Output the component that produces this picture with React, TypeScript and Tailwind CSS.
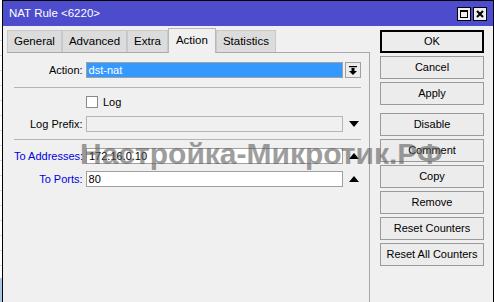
import React from "react";

const font = { fontFamily: '"Liberation Sans", Arial, sans-serif' };

function Tab({ label, active }: { label: string; active?: boolean }) {
  if (active) {
    return (
      <div className="relative z-10 -mb-px flex h-[25px] items-center border border-b-0 border-[#b8b8b8] bg-[#f0f0f0] px-[7px] text-[11.5px] text-black">
        {label}
      </div>
    );
  }
  return (
    <div className="mt-[3px] flex h-[22px] items-center border border-b-0 border-[#c8c8c8] bg-[#dcdcdc] px-[6px] text-[11.5px] text-black">
      {label}
    </div>
  );
}

function Btn({ label, primary }: { label: string; primary?: boolean }) {
  return (
    <div
      className={
        "flex h-[23px] w-[104px] items-center justify-center bg-[#ececec] text-[11px] text-black " +
        (primary ? "border-2 border-black" : "border border-[#9a9a9a]")
      }
    >
      {label}
    </div>
  );
}

function TriUp() {
  return (
    <svg width="10" height="6" viewBox="0 0 10 6">
      <path d="M0 6 L5 0 L10 6 Z" fill="#000" />
    </svg>
  );
}

function TriDown() {
  return (
    <svg width="10" height="6" viewBox="0 0 10 6">
      <path d="M0 0 L10 0 L5 6 Z" fill="#000" />
    </svg>
  );
}

export default function App() {
  return (
    <div className="flex h-[302px] w-[494px] overflow-hidden bg-[#f0f0f0]" style={font}>
      {/* behind-window strip */}
      <div className="flex w-[2px] flex-col bg-white">
        <div className="h-[26px]" />
        <div className="h-[252px] bg-[repeating-linear-gradient(to_bottom,#ffffff_0px,#ffffff_14px,#d8d8d8_14px,#d8d8d8_15px)]" />
        <div className="flex-1 bg-[#a9c6e8]" />
      </div>

      {/* window */}
      <div className="relative flex flex-1 flex-col border-x border-t border-black">
        <div className="flex h-[25px] items-center justify-between bg-[#4c4ccc] pl-[6px] pr-[6px]">
          <span className="text-[11.5px] text-white">NAT Rule &lt;6220&gt;</span>
          <div className="flex gap-[2px]">
            <div className="flex h-[14px] w-[14px] items-center justify-center border border-black bg-[#eeeeee]">
              <div className="h-[8px] w-[8px] border border-black border-t-2" />
            </div>
            <div className="flex h-[14px] w-[14px] items-center justify-center border border-black bg-[#eeeeee]">
              <svg width="8" height="8" viewBox="0 0 8 8">
                <path d="M1 1 L7 7 M7 1 L1 7" stroke="#000" strokeWidth="2" />
              </svg>
            </div>
          </div>
        </div>

        <div className="flex flex-1">
          {/* left part: tabs + panel */}
          <div className="flex w-[367px] flex-col pl-[4px] pt-[1px]">
            <div className="flex items-end">
              <Tab label="General" />
              <Tab label="Advanced" />
              <Tab label="Extra" />
              <Tab label="Action" active />
              <Tab label="Statistics" />
            </div>
            <div className="flex flex-1 flex-col border-r border-t border-[#a8a8a8] pl-[7px] pr-[8px] pt-[9px] text-[11px]">
              <div className="flex h-[16px] items-center">
                <span className="w-[71px] whitespace-nowrap pr-[2px] text-right">Action:</span>
                <div className="ml-[1px] flex h-[16px] w-[259px] items-center border border-[#a0a0a0] bg-[#3399ff] px-[2px] text-white">
                  dst-nat
                </div>
                <div className="ml-[2px] flex h-[16px] w-[16px] items-center justify-center border border-[#a0a0a0] bg-[#ececec]">
                  <svg width="8" height="9" viewBox="0 0 8 9">
                    <path d="M0 0.5 H8" stroke="#000" strokeWidth="1.5" />
                    <path d="M2.5 2 H5.5 V5 H8 L4 9 L0 5 H2.5 Z" fill="#000" />
                  </svg>
                </div>
              </div>
              <div className="mt-[9px] h-px w-[347px] bg-[#b4b4b4]" />
              <div className="mt-[8px] flex h-[12px] items-center">
                <div className="ml-[72px] h-[12px] w-[12px] border border-[#8a8a8a] bg-white" />
                <span className="ml-[5px]">Log</span>
              </div>
              <div className="mt-[8px] flex h-[16px] items-center">
                <span className="w-[71px] whitespace-nowrap pr-[2px] text-right">Log Prefix:</span>
                <div className="ml-[1px] h-[16px] w-[259px] border border-[#b4b4b4] bg-[#f0f0f0]" />
                <div className="ml-[4px] flex w-[14px] justify-center">
                  <TriDown />
                </div>
              </div>
              <div className="mt-[7px] h-px w-[347px] bg-[#b4b4b4]" />
              <div className="mt-[8px] flex h-[16px] items-center">
                <span className="w-[71px] whitespace-nowrap pr-[2px] text-right text-[#0000e0]">To Addresses:</span>
                <div className="ml-[1px] flex h-[16px] w-[259px] items-center border border-[#a0a0a0] bg-white px-[2px]">
                  172.16.0.10
                </div>
                <div className="ml-[4px] flex w-[14px] justify-center">
                  <TriUp />
                </div>
              </div>
              <div className="mt-[7px] flex h-[16px] items-center">
                <span className="w-[71px] whitespace-nowrap pr-[2px] text-right text-[#0000e0]">To Ports:</span>
                <div className="ml-[1px] flex h-[16px] w-[259px] items-center border border-[#a0a0a0] bg-white px-[2px]">
                  80
                </div>
                <div className="ml-[4px] flex w-[14px] justify-center">
                  <TriUp />
                </div>
              </div>
            </div>
          </div>

          {/* right part: buttons */}
          <div className="flex flex-col pl-[10px] pt-[4px]">
            <div className="flex flex-col gap-[3px]">
              <Btn label="OK" primary />
              <Btn label="Cancel" />
              <Btn label="Apply" />
            </div>
            <div className="mt-[8px] flex flex-col gap-[3px]">
              <Btn label="Disable" />
              <Btn label="Comment" />
              <Btn label="Copy" />
              <Btn label="Remove" />
              <Btn label="Reset Counters" />
              <Btn label="Reset All Counters" />
            </div>
          </div>
        </div>

        {/* watermark */}
        <div className="pointer-events-none absolute left-[77px] top-[138px] whitespace-nowrap text-[30px] font-bold leading-none text-[#5e5e5e] opacity-60">
          Настройка-Микротик.РФ
        </div>
      </div>
    </div>
  );
}
